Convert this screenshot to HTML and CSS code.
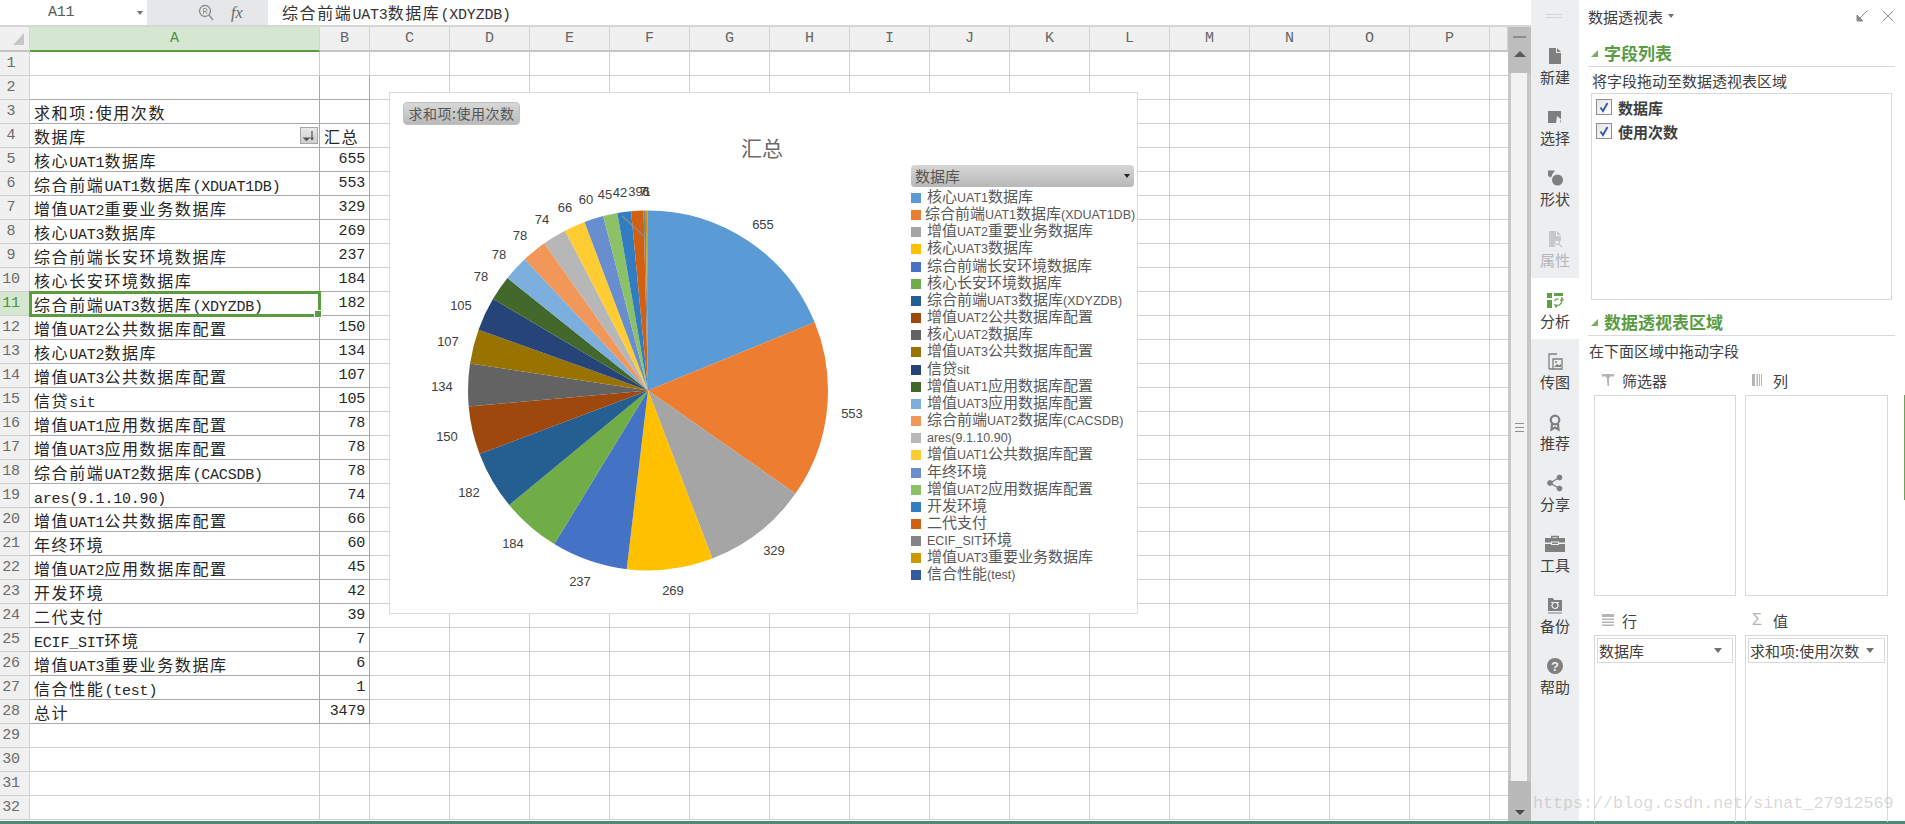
FILE: index.html
```html
<!DOCTYPE html>
<html lang="zh-CN">
<head>
  <meta charset="UTF-8">
  <title>数据透视表</title>
  <link rel="stylesheet" href="styles.css">
</head>
<body>
<div class="app">
  <div class="workspace">
    <div class="main">
      <!-- Formula bar -->
      <div class="formula-bar">
        <div class="name-box"><span>A11</span><i class="caret"></i></div>
        <div class="fx-box">
          <svg width="16" height="17" viewBox="0 0 16 17" fill="none" stroke="#8a8a8a" stroke-width="1.3">
            <circle cx="7" cy="7" r="5.5"/><path d="M11 11l4 5"/><path d="M5.5 10V4.5h2a1.4 1.4 0 0 1 0 3h-2M7.5 7.5l1.5 2.5" stroke-width=".9"/>
          </svg>
          <span class="fx">fx</span>
        </div>
        <div class="formula-text">综合前端<span class="lt">UAT3</span>数据库<span class="lt">(XDYZDB)</span></div>
      </div>

      <!-- Sheet -->
      <div class="sheet">
        <table class="grid">
          <colgroup><col class="c-head"><col class="c-a"><col class="c-b"><col span="14" class="c-n"><col class="c-end"></colgroup>
          <tr class="col-heads"><th class="corner"><i></i></th><th class="on">A</th><th>B</th><th>C</th><th>D</th><th>E</th><th>F</th><th>G</th><th>H</th><th>I</th><th>J</th><th>K</th><th>L</th><th>M</th><th>N</th><th>O</th><th>P</th><th></th></tr>
          <tr><th>1</th><td></td><td></td><td class="rest" colspan="15"></td></tr>
          <tr class="pv"><th>2</th><td></td><td></td><td class="rest" colspan="15"></td></tr>
          <tr class="pv"><th>3</th><td>求和项<span class="lt">:</span>使用次数</td><td></td><td class="rest" colspan="15"></td></tr>
          <tr class="pv"><th>4</th><td class="has-filter">数据库
            <span class="filter-btn"><svg width="14" height="12" viewBox="0 0 14 12"><path d="M2 8h5l-2.5 2.5zM10 1v9" stroke="#555" stroke-width="1.2" fill="#555"/><path d="M8 7.5l2 3 2-3z" fill="#555"/></svg></span>
          </td><td>汇总</td><td class="rest" colspan="15"></td></tr>
          <tr class="pv"><th>5</th><td>核心<span class="lt">UAT1</span>数据库</td><td class="num lt">655</td><td class="rest" colspan="15"></td></tr>
          <tr class="pv"><th>6</th><td>综合前端<span class="lt">UAT1</span>数据库<span class="lt">(XDUAT1DB)</span></td><td class="num lt">553</td><td class="rest" colspan="15"></td></tr>
          <tr class="pv"><th>7</th><td>增值<span class="lt">UAT2</span>重要业务数据库</td><td class="num lt">329</td><td class="rest" colspan="15"></td></tr>
          <tr class="pv"><th>8</th><td>核心<span class="lt">UAT3</span>数据库</td><td class="num lt">269</td><td class="rest" colspan="15"></td></tr>
          <tr class="pv"><th>9</th><td>综合前端长安环境数据库</td><td class="num lt">237</td><td class="rest" colspan="15"></td></tr>
          <tr class="pv"><th>10</th><td>核心长安环境数据库</td><td class="num lt">184</td><td class="rest" colspan="15"></td></tr>
          <tr class="pv row-on"><th>11</th><td class="selected">综合前端<span class="lt">UAT3</span>数据库<span class="lt">(XDYZDB)</span></td><td class="num lt">182</td><td class="rest" colspan="15"></td></tr>
          <tr class="pv"><th>12</th><td>增值<span class="lt">UAT2</span>公共数据库配置</td><td class="num lt">150</td><td class="rest" colspan="15"></td></tr>
          <tr class="pv"><th>13</th><td>核心<span class="lt">UAT2</span>数据库</td><td class="num lt">134</td><td class="rest" colspan="15"></td></tr>
          <tr class="pv"><th>14</th><td>增值<span class="lt">UAT3</span>公共数据库配置</td><td class="num lt">107</td><td class="rest" colspan="15"></td></tr>
          <tr class="pv"><th>15</th><td>信贷<span class="lt">sit</span></td><td class="num lt">105</td><td class="rest" colspan="15"></td></tr>
          <tr class="pv"><th>16</th><td>增值<span class="lt">UAT1</span>应用数据库配置</td><td class="num lt">78</td><td class="rest" colspan="15"></td></tr>
          <tr class="pv"><th>17</th><td>增值<span class="lt">UAT3</span>应用数据库配置</td><td class="num lt">78</td><td class="rest" colspan="15"></td></tr>
          <tr class="pv"><th>18</th><td>综合前端<span class="lt">UAT2</span>数据库<span class="lt">(CACSDB)</span></td><td class="num lt">78</td><td class="rest" colspan="15"></td></tr>
          <tr class="pv"><th>19</th><td><span class="lt">ares(9.1.10.90)</span></td><td class="num lt">74</td><td class="rest" colspan="15"></td></tr>
          <tr class="pv"><th>20</th><td>增值<span class="lt">UAT1</span>公共数据库配置</td><td class="num lt">66</td><td class="rest" colspan="15"></td></tr>
          <tr class="pv"><th>21</th><td>年终环境</td><td class="num lt">60</td><td class="rest" colspan="15"></td></tr>
          <tr class="pv"><th>22</th><td>增值<span class="lt">UAT2</span>应用数据库配置</td><td class="num lt">45</td><td class="rest" colspan="15"></td></tr>
          <tr class="pv"><th>23</th><td>开发环境</td><td class="num lt">42</td><td class="rest" colspan="15"></td></tr>
          <tr class="pv"><th>24</th><td>二代支付</td><td class="num lt">39</td><td class="rest" colspan="15"></td></tr>
          <tr class="pv"><th>25</th><td><span class="lt">ECIF_SIT</span>环境</td><td class="num lt">7</td><td class="rest" colspan="15"></td></tr>
          <tr class="pv"><th>26</th><td>增值<span class="lt">UAT3</span>重要业务数据库</td><td class="num lt">6</td><td class="rest" colspan="15"></td></tr>
          <tr class="pv"><th>27</th><td>信合性能<span class="lt">(test)</span></td><td class="num lt">1</td><td class="rest" colspan="15"></td></tr>
          <tr class="pv"><th>28</th><td>总计</td><td class="num lt">3479</td><td class="rest" colspan="15"></td></tr>
          <tr><th>29</th><td></td><td></td><td class="rest" colspan="15"></td></tr>
          <tr><th>30</th><td></td><td></td><td class="rest" colspan="15"></td></tr>
          <tr><th>31</th><td></td><td></td><td class="rest" colspan="15"></td></tr>
          <tr><th>32</th><td></td><td></td><td class="rest" colspan="15"></td></tr>
        </table>

        <div class="vbar">
          <div class="vbar-top"><i class="dash"></i><i class="arrow-up"></i></div>
          <div class="vbar-thumb"><i></i><i></i><i></i></div>
          <div class="vbar-bottom"><i class="arrow-down"></i></div>
        </div>
      </div>

      <!-- Pie chart floats over the sheet -->
      <div class="chart">
        <div class="plot">
          <svg class="pie" width="521" height="520" viewBox="390 93 521 520">
            <g fill="none" stroke-width="180" transform="rotate(-90 648 390.4)">
              <circle cx="648" cy="390.4" r="90" pathLength="3479" stroke="#5b9bd5" stroke-dasharray="655 3479" stroke-dashoffset="0"/>
              <circle cx="648" cy="390.4" r="90" pathLength="3479" stroke="#ed7d31" stroke-dasharray="553 3479" stroke-dashoffset="-655"/>
              <circle cx="648" cy="390.4" r="90" pathLength="3479" stroke="#a5a5a5" stroke-dasharray="329 3479" stroke-dashoffset="-1208"/>
              <circle cx="648" cy="390.4" r="90" pathLength="3479" stroke="#ffc000" stroke-dasharray="269 3479" stroke-dashoffset="-1537"/>
              <circle cx="648" cy="390.4" r="90" pathLength="3479" stroke="#4472c4" stroke-dasharray="237 3479" stroke-dashoffset="-1806"/>
              <circle cx="648" cy="390.4" r="90" pathLength="3479" stroke="#70ad47" stroke-dasharray="184 3479" stroke-dashoffset="-2043"/>
              <circle cx="648" cy="390.4" r="90" pathLength="3479" stroke="#255e91" stroke-dasharray="182 3479" stroke-dashoffset="-2227"/>
              <circle cx="648" cy="390.4" r="90" pathLength="3479" stroke="#9e480e" stroke-dasharray="150 3479" stroke-dashoffset="-2409"/>
              <circle cx="648" cy="390.4" r="90" pathLength="3479" stroke="#636363" stroke-dasharray="134 3479" stroke-dashoffset="-2559"/>
              <circle cx="648" cy="390.4" r="90" pathLength="3479" stroke="#997300" stroke-dasharray="107 3479" stroke-dashoffset="-2693"/>
              <circle cx="648" cy="390.4" r="90" pathLength="3479" stroke="#264478" stroke-dasharray="105 3479" stroke-dashoffset="-2800"/>
              <circle cx="648" cy="390.4" r="90" pathLength="3479" stroke="#43682b" stroke-dasharray="78 3479" stroke-dashoffset="-2905"/>
              <circle cx="648" cy="390.4" r="90" pathLength="3479" stroke="#7cafdd" stroke-dasharray="78 3479" stroke-dashoffset="-2983"/>
              <circle cx="648" cy="390.4" r="90" pathLength="3479" stroke="#f1975a" stroke-dasharray="78 3479" stroke-dashoffset="-3061"/>
              <circle cx="648" cy="390.4" r="90" pathLength="3479" stroke="#b7b7b7" stroke-dasharray="74 3479" stroke-dashoffset="-3139"/>
              <circle cx="648" cy="390.4" r="90" pathLength="3479" stroke="#ffcd33" stroke-dasharray="66 3479" stroke-dashoffset="-3213"/>
              <circle cx="648" cy="390.4" r="90" pathLength="3479" stroke="#698ed0" stroke-dasharray="60 3479" stroke-dashoffset="-3279"/>
              <circle cx="648" cy="390.4" r="90" pathLength="3479" stroke="#8cc168" stroke-dasharray="45 3479" stroke-dashoffset="-3339"/>
              <circle cx="648" cy="390.4" r="90" pathLength="3479" stroke="#327dc2" stroke-dasharray="42 3479" stroke-dashoffset="-3384"/>
              <circle cx="648" cy="390.4" r="90" pathLength="3479" stroke="#d26012" stroke-dasharray="39 3479" stroke-dashoffset="-3426"/>
              <circle cx="648" cy="390.4" r="90" pathLength="3479" stroke="#848484" stroke-dasharray="7 3479" stroke-dashoffset="-3465"/>
              <circle cx="648" cy="390.4" r="90" pathLength="3479" stroke="#cc9a00" stroke-dasharray="6 3479" stroke-dashoffset="-3472"/>
              <circle cx="648" cy="390.4" r="90" pathLength="3479" stroke="#335aa1" stroke-dasharray="1 3479" stroke-dashoffset="-3478"/>
            </g>
            <path class="leader" d="M622 216L646 238"/>
            <text class="pie-title" x="762" y="147">汇总</text>
            <g class="pie-labels">
              <text x="763" y="224.5">655</text>
              <text x="852" y="413.5">553</text>
              <text x="774" y="550">329</text>
              <text x="673" y="590">269</text>
              <text x="580" y="581.5">237</text>
              <text x="513" y="543.5">184</text>
              <text x="469" y="492">182</text>
              <text x="447" y="436.5">150</text>
              <text x="442" y="386">134</text>
              <text x="448" y="341.5">107</text>
              <text x="461" y="305.5">105</text>
              <text x="481" y="276.5">78</text>
              <text x="499" y="254.5">78</text>
              <text x="520" y="235.5">78</text>
              <text x="542" y="219.5">74</text>
              <text x="565" y="207.5">66</text>
              <text x="586" y="199">60</text>
              <text x="605" y="194.5">45</text>
              <text x="620" y="192">42</text>
              <text x="635.5" y="191">39</text>
              <text x="643" y="191">7</text>
              <text x="646" y="191">6</text>
              <text x="647" y="191">1</text>
            </g>
          </svg>
          <div class="chart-btn">求和项:使用次数</div>
        </div>
        <div class="legend">
          <div class="legend-select"><span>数据库</span><i class="caret dark"></i></div>
          <div class="legend-item"><i style="background:#5b9bd5"></i>核心<span class="la">UAT1</span>数据库</div>
          <div class="legend-item shift"><i style="background:#ed7d31"></i>综合前端<span class="la">UAT1</span>数据库<span class="la">(XDUAT1DB)</span></div>
          <div class="legend-item"><i style="background:#a5a5a5"></i>增值<span class="la">UAT2</span>重要业务数据库</div>
          <div class="legend-item"><i style="background:#ffc000"></i>核心<span class="la">UAT3</span>数据库</div>
          <div class="legend-item"><i style="background:#4472c4"></i>综合前端长安环境数据库</div>
          <div class="legend-item"><i style="background:#70ad47"></i>核心长安环境数据库</div>
          <div class="legend-item"><i style="background:#255e91"></i>综合前端<span class="la">UAT3</span>数据库<span class="la">(XDYZDB)</span></div>
          <div class="legend-item"><i style="background:#9e480e"></i>增值<span class="la">UAT2</span>公共数据库配置</div>
          <div class="legend-item"><i style="background:#636363"></i>核心<span class="la">UAT2</span>数据库</div>
          <div class="legend-item"><i style="background:#997300"></i>增值<span class="la">UAT3</span>公共数据库配置</div>
          <div class="legend-item"><i style="background:#264478"></i>信贷<span class="la">sit</span></div>
          <div class="legend-item"><i style="background:#43682b"></i>增值<span class="la">UAT1</span>应用数据库配置</div>
          <div class="legend-item"><i style="background:#7cafdd"></i>增值<span class="la">UAT3</span>应用数据库配置</div>
          <div class="legend-item"><i style="background:#f1975a"></i>综合前端<span class="la">UAT2</span>数据库<span class="la">(CACSDB)</span></div>
          <div class="legend-item"><i style="background:#b7b7b7"></i><span class="la">ares(9.1.10.90)</span></div>
          <div class="legend-item"><i style="background:#ffcd33"></i>增值<span class="la">UAT1</span>公共数据库配置</div>
          <div class="legend-item"><i style="background:#698ed0"></i>年终环境</div>
          <div class="legend-item"><i style="background:#8cc168"></i>增值<span class="la">UAT2</span>应用数据库配置</div>
          <div class="legend-item"><i style="background:#327dc2"></i>开发环境</div>
          <div class="legend-item"><i style="background:#d26012"></i>二代支付</div>
          <div class="legend-item"><i style="background:#848484"></i><span class="la">ECIF_SIT</span>环境</div>
          <div class="legend-item"><i style="background:#cc9a00"></i>增值<span class="la">UAT3</span>重要业务数据库</div>
          <div class="legend-item"><i style="background:#335aa1"></i>信合性能<span class="la">(test)</span></div>
        </div>
      </div>
    </div>

    <!-- Tool strip -->
    <div class="tools">
      <div class="tools-grip"></div>
      <div class="tool">
        <svg width="20" height="20" viewBox="0 0 20 20" fill="#7f7f7f"><path d="M4 2h7v5h5v11H4z"/><path d="M12 2l4 4h-4z"/></svg>
        <span>新建</span>
      </div>
      <div class="tool">
        <svg width="20" height="20" viewBox="0 0 20 20"><path d="M3 4h13v12H3z" fill="#7f7f7f"/><path d="M12 9l5 4-2 .5 1 3-5 0z" fill="#eceef0"/></svg>
        <span>选择</span>
      </div>
      <div class="tool">
        <svg width="20" height="20" viewBox="0 0 20 20" fill="#7f7f7f"><path d="M3 2.5h7L7.5 6 6 9.5 3 8z"/><circle cx="12.5" cy="12" r="5.500"/></svg>
        <span>形状</span>
      </div>
      <div class="tool off">
        <svg width="20" height="20" viewBox="0 0 20 20" fill="#c6c8ca"><path d="M4 2h7v5h5v5h-5l-2 2 1 4H4z"/><path d="M12 2l4 4h-4z"/><circle cx="12" cy="13" r="2.5" fill="none" stroke="#c6c8ca" stroke-width="1.2"/><path d="M14 15l3 3" stroke="#c6c8ca" stroke-width="1.5"/></svg>
        <span>属性</span>
      </div>
      <div class="tool active">
        <svg width="20" height="20" viewBox="0 0 20 20" fill="#5fa046"><path d="M2 3h5v5H2zM9 3h9v3H9zM2 10h5v8H2z"/><path d="M10 15a5 5 0 0 0 7-5M9.5 14l1.5 3 1.5-2.5M15.5 11l1.5-3 1.5 2.5M9.5 11a4 4 0 0 1 4-2" fill="none" stroke="#5fa046" stroke-width="1.2"/></svg>
        <span>分析</span>
      </div>
      <div class="tool">
        <svg width="20" height="20" viewBox="0 0 20 20" fill="none" stroke="#7f7f7f" stroke-width="1.3"><path d="M4 18V3h8M4 18h13V8H8v10"/><path d="M9 16l3-3 2 1.5 2-1.5V16z" fill="#7f7f7f" stroke="none"/><circle cx="11" cy="11" r="1" fill="#7f7f7f" stroke="none"/></svg>
        <span>传图</span>
      </div>
      <div class="tool">
        <svg width="20" height="20" viewBox="0 0 20 20" fill="none" stroke="#7f7f7f" stroke-width="2.2"><circle cx="10" cy="8" r="4.3"/><path d="M7 12l-.5 5.5 3.5-2 3.5 2L13 12"/></svg>
        <span>推荐</span>
      </div>
      <div class="tool">
        <svg width="20" height="20" viewBox="0 0 20 20" fill="#7f7f7f" stroke="#7f7f7f"><path d="M14.5 4.5L5 10l9.5 5.5" fill="none" stroke-width="1.4"/><circle cx="14.5" cy="4.5" r="2.4"/><circle cx="5" cy="10" r="2.4"/><circle cx="14.5" cy="15.5" r="2.4"/></svg>
        <span>分享</span>
      </div>
      <div class="tool">
        <svg width="22" height="20" viewBox="0 0 22 20" fill="#7f7f7f"><path d="M7 4V1.800h8V4h-1.500V3.200h-5V4z"/><path d="M1 4h20v4.500H1zM1 10h20v8H1z"/><path d="M7 7.500h8v3.500H7z" fill="#eceef0"/><path d="M8 8.500h6v1.500H8z" fill="#7f7f7f"/></svg>
        <span>工具</span>
      </div>
      <div class="tool">
        <svg width="20" height="20" viewBox="0 0 20 20" fill="#7f7f7f"><path d="M3 3h5l1 2h8v11H3zM3 17.500h14v1H3z"/><circle cx="10" cy="10.500" r="3" fill="none" stroke="#eceef0" stroke-width="1.2"/><path d="M6 7h8v1H6z" fill="#eceef0"/></svg>
        <span>备份</span>
      </div>
      <div class="tool">
        <svg width="20" height="20" viewBox="0 0 20 20"><circle cx="10" cy="10" r="8" fill="#7f7f7f"/><text class="help-mark" x="10" y="14.5">?</text></svg>
        <span>帮助</span>
      </div>
    </div>

    <!-- Pivot table panel -->
    <div class="panel">
      <div class="panel-head">
        <span class="panel-title">数据透视表</span><i class="caret"></i>
        <div class="panel-actions">
          <svg width="12" height="12" viewBox="0 0 12 12" fill="none" stroke="#8a8a8a"><path d="M11.500.5L2 10"/><path d="M1 5v6h6z" fill="#8a8a8a"/></svg>
          <svg width="12" height="12" viewBox="0 0 12 12" fill="none" stroke="#8a8a8a"><path d="M.5.5l11 11M11.500.5l-11 11"/></svg>
        </div>
      </div>

      <h2 class="section-title"><i></i>字段列表</h2>
      <p class="field-hint">将字段拖动至数据透视表区域</p>
      <div class="field-list">
        <label class="field-row"><span class="check"><svg width="12" height="12" viewBox="0 0 12 12"><path d="M2.500 6.500l2.500 3.500 4.500-8" fill="none" stroke="#2f5ca8" stroke-width="1.800"/></svg></span>数据库</label>
        <label class="field-row"><span class="check"><svg width="12" height="12" viewBox="0 0 12 12"><path d="M2.500 6.500l2.500 3.500 4.500-8" fill="none" stroke="#2f5ca8" stroke-width="1.800"/></svg></span>使用次数</label>
      </div>

      <h2 class="section-title"><i></i>数据透视表区域</h2>
      <p class="zone-hint">在下面区域中拖动字段</p>
      <div class="zones">
        <div class="zone-label">
          <svg width="14" height="14" viewBox="0 0 14 14" fill="#b5b5b5"><path d="M1 1h12v2.500H9L8 6v7H6.500L6 6 5 3.500H1z"/></svg>筛选器
        </div>
        <div class="zone-label">
          <svg width="14" height="14" viewBox="0 0 14 14" fill="#b5b5b5"><path d="M0 1h3v12H0zM4.500 1h1.500v12H4.500zM7 1h1v12H7zM9 1h1v12H9z"/></svg>列
        </div>
        <div class="zone-box"></div>
        <div class="zone-box"></div>
        <div class="zone-label low">
          <svg width="14" height="14" viewBox="0 0 14 14" fill="#b5b5b5"><path d="M1 1h12v3H1zM1 5.500h12V7H1zM1 8.500h12V10H1zM1 11.500h12V13H1z"/></svg>行
        </div>
        <div class="zone-label low"><span class="sigma">Σ</span>值</div>
        <div class="zone-box open"><div class="zone-field"><span>数据库</span><i class="caret wide"></i></div></div>
        <div class="zone-box open"><div class="zone-field"><span>求和项:使用次数</span><i class="caret wide"></i></div></div>
      </div>
      <i class="edge-mark"></i>
    </div>
  </div>
  <div class="status-line"></div>
  <div class="watermark">https://blog.csdn.net/sinat_27912569</div>
</div>
</body>
</html>
```

FILE: styles.css
```css
/* Base */
* {
  margin: 0;
  padding: 0;
  box-sizing: border-box;
}

body {
  font-family: "Noto Sans CJK SC", "Noto Sans", sans-serif;
  background: #fff;
  color: #262626;
  overflow: hidden;
}

i {
  font-style: normal;
}

.app {
  position: relative;
  width: 1905px;
  height: 824px;
  overflow: hidden;
}

.workspace {
  display: flex;
  height: 821px;
}

.status-line {
  height: 3px;
  background: #4f8a78;
}

.main {
  position: relative;
  width: 1531px;
  flex: none;
}

/* Half width Latin inside the wide CJK text */
.lt {
  font-family: "Liberation Mono", monospace;
  font-size: 15px;
  letter-spacing: -.2px;
  line-height: 1;
}

.caret {
  display: inline-block;
  width: 0;
  height: 0;
  border-left: 3.5px solid transparent;
  border-right: 3.5px solid transparent;
  border-top: 4px solid #707070;
}

/* Formula bar */
.formula-bar {
  display: flex;
  height: 27px;
  border-bottom: 2px solid #d6d6d6;
}

.name-box {
  width: 147px;
  display: flex;
  align-items: center;
  justify-content: space-between;
  padding: 0 4px 0 48px;
  font: 15px/24px "Liberation Mono", monospace;
  letter-spacing: -.2px;
  color: #595959;
}

.fx-box {
  width: 121px;
  background: #e6e7e8;
  display: flex;
  align-items: center;
  padding-left: 51px;
  gap: 17px;
}

.fx {
  font: italic 16px "Liberation Serif", serif;
  color: #666;
}

.formula-text {
  padding-left: 14px;
  font-size: 16px;
  letter-spacing: 1.6px;
  line-height: 25px;
  color: #333;
}

/* Sheet */
.sheet {
  display: flex;
  height: 794px;
}

.grid {
  width: 1508px;
  table-layout: fixed;
  border-collapse: separate;
  border-spacing: 0;
  flex: none;
  align-self: flex-start;
}

.c-head { width: 30px; }
.c-a { width: 290px; }
.c-b { width: 50px; }
.c-n { width: 80px; }
.c-end { width: 18px; }

.grid tr {
  height: 24px;
}

.grid th,
.grid td {
  height: 24px;
  white-space: nowrap;
  border-bottom: 1px solid #cfcfcf;
}

.grid th {
  background: #f0f0f0;
  font: 400 15px/20px "Liberation Mono", monospace;
  letter-spacing: -.2px;
  color: #6b6b6b;
  padding-right: 7px;
  border-right: 1px solid #d4d4d4;
}

.grid td {
  font-size: 16px;
  letter-spacing: 1.6px;
  line-height: 20px;
  padding: 1px 4px 0;
  border-right: 1px solid #cfcfcf;
  color: #262626;
}

.grid .col-heads th {
  height: 25px;
  padding-right: 0;
  border-bottom: 2px solid #c4c4c4;
  color: #666;
}

.grid .col-heads th.on {
  background: #d5e6d1;
  color: #4f8f3c;
  border-bottom-color: #5a9c3e;
}

.corner {
  position: relative;
}

.corner i {
  position: absolute;
  right: 5px;
  bottom: 5px;
  border-left: 11px solid transparent;
  border-bottom: 12px solid #c6c6c6;
}

.grid td.rest {
  padding: 0;
  border-right: 0;
  background: repeating-linear-gradient(90deg, transparent 0 79px, #cfcfcf 79px 80px);
}

/* Pivot table lines are darker */
.grid .pv td:nth-child(2),
.grid .pv td:nth-child(3) {
  border-bottom-color: #a9a9a9;
  border-right-color: #a9a9a9;
}

.grid .row-on th {
  background: #d5e6d1;
  color: #4f8f3c;
}

.grid td.num {
  text-align: right;
  font-size: 15px;
  letter-spacing: -.2px;
}

.has-filter {
  position: relative;
}

.filter-btn {
  position: absolute;
  right: 1px;
  top: 3px;
  width: 18px;
  height: 17px;
  display: flex;
  align-items: center;
  justify-content: center;
  background: linear-gradient(#e8e8e8, #cfcfcf);
  border: 1px solid #a6a6a6;
}

.grid td.selected {
  position: relative;
  outline: 3px solid #5a9c3e;
  outline-offset: -2px;
}

.selected::after {
  content: "";
  position: absolute;
  right: -3px;
  bottom: -3px;
  width: 6px;
  height: 6px;
  background: #5a9c3e;
  border: 1px solid #fff;
}

/* Vertical scrollbar */
.vbar {
  width: 23px;
  display: flex;
  flex-direction: column;
  background: #c6c7c9;
}

.vbar-top {
  height: 46px;
  background: #bdbdbd;
  display: flex;
  flex-direction: column;
  align-items: center;
  padding-top: 9px;
  gap: 13px;
}

.dash {
  width: 13px;
  height: 2px;
  background: #8c8c8c;
}

.arrow-up {
  border-left: 6px solid transparent;
  border-right: 6px solid transparent;
  border-bottom: 6px solid #5a5a5a;
}

.vbar-thumb {
  flex: 1;
  width: 16px;
  margin-left: 3px;
  background: #f2f2f2;
  display: flex;
  flex-direction: column;
  align-items: center;
  padding-top: 350px;
  gap: 3px;
}

.vbar-thumb i {
  width: 9px;
  height: 1px;
  background: #909090;
}

.vbar-bottom {
  height: 40px;
  background: #b9b9b9;
  display: flex;
  justify-content: center;
  align-items: flex-end;
  padding-bottom: 6px;
}

.arrow-down {
  border-left: 5px solid transparent;
  border-right: 5px solid transparent;
  border-top: 5px solid #4a4a4a;
}

/* Chart */
.chart {
  position: absolute;
  left: 389px;
  top: 92px;
  width: 749px;
  height: 522px;
  background: #fff;
  border: 1px solid #dcdcdc;
  display: flex;
  overflow: hidden;
}

.plot {
  position: relative;
  width: 521px;
  flex: none;
}

.pie {
  position: absolute;
  left: 0;
  top: 0;
}

.leader {
  fill: none;
  stroke: #8d8d8d;
  stroke-width: 1.3;
}

.pie-title {
  font-size: 21px;
  fill: #6a6a6a;
  text-anchor: middle;
  dominant-baseline: central;
}

.pie-labels text {
  font: 13px "Liberation Sans", sans-serif;
  fill: #404040;
  text-anchor: middle;
  dominant-baseline: central;
}

.chart-btn {
  position: absolute;
  left: 13px;
  top: 9px;
  width: 117px;
  height: 23px;
  background: linear-gradient(#d9d9d9, #b9b9b9);
  border: 1px solid #c0c0c0;
  border-radius: 4px;
  font-size: 14px;
  line-height: 20px;
  letter-spacing: .5px;
  text-align: center;
  color: #555;
}

.legend {
  flex: none;
  width: 226px;
  padding-top: 72px;
}

.legend-select {
  width: 223px;
  height: 22px;
  display: flex;
  align-items: center;
  justify-content: space-between;
  padding: 0 4px;
  background: linear-gradient(#d6d6d6, #b8b8b8);
  border-radius: 4px;
  font-size: 15px;
  line-height: 20px;
  color: #555;
}

.caret.dark {
  border-top-color: #222;
}

.legend-item {
  height: 17.17px;
  font-size: 15px;
  line-height: 17px;
  color: #595959;
  white-space: nowrap;
}

.legend-item i {
  display: inline-block;
  width: 10px;
  height: 10px;
  margin-right: 6px;
  vertical-align: -1px;
}

.legend-item.shift i {
  margin-right: 4px;
}

.la {
  font-family: "Liberation Sans", sans-serif;
  font-size: 12.5px;
  line-height: 1;
}

/* Tool strip */
.tools {
  width: 48px;
  flex: none;
  background: #eceef0;
  padding-top: 34px;
  position: relative;
}

.tools-grip {
  position: absolute;
  left: 15px;
  top: 14px;
  width: 16px;
  height: 4px;
  border-top: 1px solid #d4d4d4;
  border-bottom: 1px solid #d4d4d4;
}

.tool {
  height: 61px;
  display: flex;
  flex-direction: column;
  align-items: center;
  padding-top: 12px;
}

.tool span {
  margin-top: 1px;
  font-size: 15px;
  line-height: 20px;
  color: #404040;
}

.tool.off span {
  color: #b4b6b8;
}

.tool.active {
  background: #fff;
}

.help-mark {
  font: 700 13px "Liberation Sans", sans-serif;
  fill: #eceef0;
  text-anchor: middle;
}

/* Panel */
.panel {
  position: relative;
  flex: 1;
  background: #fff;
}

.panel-head {
  display: flex;
  align-items: center;
  gap: 5px;
  height: 32px;
  padding: 0 11px 0 9px;
  margin-bottom: 8px;
}

.panel-title {
  font-size: 15px;
  color: #404040;
}

.panel-actions {
  margin-left: auto;
  display: flex;
  gap: 14px;
}

.section-title {
  display: flex;
  align-items: center;
  gap: 6px;
  height: 27px;
  margin: 0 10px 0 9px;
  padding-left: 3px;
  border-bottom: 1px solid #d9d9d9;
  font-size: 17px;
  font-weight: 700;
  line-height: 24px;
  color: #5a9c43;
}

.section-title i {
  border-left: 7px solid transparent;
  border-bottom: 7px solid #78b05f;
}

.field-hint {
  height: 26px;
  padding-left: 13px;
  font-size: 15px;
  line-height: 27px;
  color: #404040;
}

.field-list {
  width: 301px;
  height: 207px;
  margin: 0 0 9px 12px;
  padding-top: 1px;
  border: 1px solid #d9d9d9;
}

.field-row {
  display: flex;
  align-items: center;
  gap: 6px;
  height: 24px;
  padding-left: 4px;
  font-size: 15px;
  font-weight: 700;
  color: #404040;
}

.check {
  width: 16px;
  height: 16px;
  display: flex;
  align-items: center;
  justify-content: center;
  border: 1px solid #8f8f8f;
  background: linear-gradient(135deg, #e4e4e4, #fff);
}

.zone-hint {
  height: 29px;
  padding-left: 10px;
  font-size: 15px;
  line-height: 30px;
  color: #404040;
}

.zones {
  display: grid;
  grid-template-columns: 142px 143px;
  grid-template-rows: 30px 201px 39px 187px;
  column-gap: 9px;
  padding-left: 15px;
}

.zone-label {
  display: flex;
  align-items: center;
  gap: 7px;
  padding-left: 7px;
  font-size: 15px;
  color: #404040;
}

.zone-label.low {
  padding-top: 9px;
}

.sigma {
  width: 14px;
  font-family: "Liberation Sans", sans-serif;
  font-size: 16px;
  color: #b5b5b5;
}

.zone-box {
  border: 1px solid #d9d9d9;
}

.zone-box.open {
  border-bottom: 0;
  padding: 2px;
}

.zone-field {
  height: 25px;
  display: flex;
  align-items: center;
  justify-content: space-between;
  padding: 0 10px 0 1px;
  border: 1px solid #d9d9d9;
  font-size: 15px;
  line-height: 20px;
  color: #404040;
}

.caret.wide {
  border-left-width: 4.5px;
  border-right-width: 4.5px;
  border-top-width: 5px;
}

.edge-mark {
  position: absolute;
  right: 0;
  top: 395px;
  width: 1px;
  height: 105px;
  background: #6aa84f;
}

.watermark {
  position: absolute;
  left: 1533px;
  top: 794px;
  font: 16.7px/20px "Liberation Mono", monospace;
  color: rgba(170, 170, 170, .45);
  white-space: nowrap;
}
```
